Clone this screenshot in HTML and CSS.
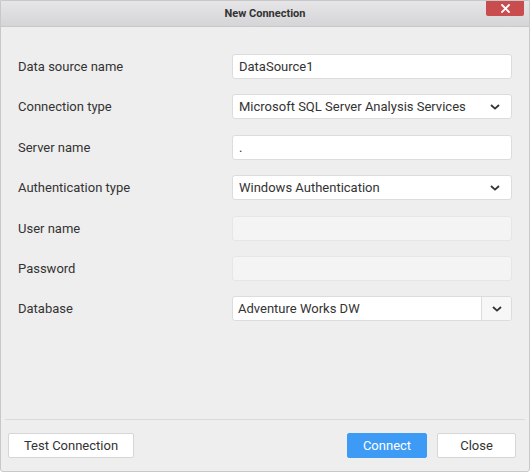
FILE: index.html
```html
<!DOCTYPE html>
<html>
<head>
<meta charset="utf-8">
<link rel="stylesheet" href="styles.css">
</head>
<body>
<div class="dialog">
  <div class="titlebar">
    <span class="title">New Connection</span>
    <button class="close-x" aria-label="Close">
      <svg width="9" height="9" viewBox="0 0 9 9"><path d="M1 1L8 8M8 1L1 8" stroke="#fff" stroke-width="1.8" stroke-linecap="square"/></svg>
    </button>
  </div>
  <div class="body">
    <div class="row"><label>Data source name</label><div class="field">DataSource1</div></div>
    <div class="row"><label>Connection type</label><div class="field select"><span>Microsoft SQL Server Analysis Services</span><svg class="chev" width="10" height="6" viewBox="0 0 10 6"><path d="M1 1L5 4.6L9 1" fill="none" stroke="#333" stroke-width="1.8"/></svg></div></div>
    <div class="row"><label>Server name</label><div class="field">.</div></div>
    <div class="row"><label>Authentication type</label><div class="field select"><span>Windows Authentication</span><svg class="chev" width="10" height="6" viewBox="0 0 10 6"><path d="M1 1L5 4.6L9 1" fill="none" stroke="#333" stroke-width="1.8"/></svg></div></div>
    <div class="row"><label>User name</label><div class="field disabled"></div></div>
    <div class="row"><label>Password</label><div class="field disabled"></div></div>
    <div class="row"><label>Database</label><div class="field combo"><span class="combo-text">Adventure Works DW</span><span class="combo-btn"><svg width="10" height="6" viewBox="0 0 10 6"><path d="M1 1L5 4.6L9 1" fill="none" stroke="#333" stroke-width="1.8"/></svg></span></div></div>
  </div>
  <div class="footer">
    <button class="btn">Test Connection</button>
    <div class="spacer"></div>
    <button class="btn primary">Connect</button>
    <button class="btn close-btn">Close</button>
  </div>
</div>
</body>
</html>
```
FILE: styles.css
```css
* { box-sizing: border-box; }
html, body { margin: 0; padding: 0; background: #ffffff; }
body {
  font-family: Roboto, "Noto Sans", Arial, sans-serif;
  font-size: 13px;
  color: #333;
}
.dialog {
  width: 530px;
  height: 472px;
  border: 1px solid #c8c8c8;
  border-radius: 0 0 3px 3px;
  background: #eeeeee;
  display: flex;
  flex-direction: column;
}
.titlebar {
  height: 26px;
  background: linear-gradient(#e6e5e7, #d5d4d6);
  border-bottom: 1px solid #c9c9cb;
  display: flex;
  justify-content: center;
  align-items: center;
  position: relative;
}
.title {
  font-size: 11px;
  font-weight: 700;
  color: #333;
}
.close-x {
  position: absolute;
  top: 0;
  right: 5px;
  width: 38px;
  height: 15px;
  border: none;
  padding: 0;
  background: #c94c4e;
  border-radius: 0 0 2px 2px;
  display: flex;
  align-items: center;
  justify-content: center;
}
.body {
  flex: 1;
  padding: 27px 17px 0 17px;
  display: flex;
  flex-direction: column;
  gap: 15.4px;
}
.row {
  display: flex;
  align-items: center;
  height: 25px;
}
.row label {
  width: 214px;
  font-size: 13px;
  color: #333;
}
.field {
  width: 280px;
  height: 25px;
  background: #fff;
  border: 1px solid #dcdcdc;
  border-radius: 3px;
  padding: 0 6px;
  display: flex;
  align-items: center;
  font-size: 13px;
  color: #333;
}
.select { justify-content: space-between; padding-right: 11px; }
.chev { display: block; }
.disabled { background: #f4f4f4; border-color: #e6e6e6; }
.combo { padding: 0; }
.combo-text { flex: 1; padding-left: 5px; }
.combo-btn {
  width: 30px;
  height: 100%;
  border-left: 1px solid #dcdcdc;
  background: #f7f7f7;
  display: flex;
  align-items: center;
  justify-content: center;
  border-radius: 0 3px 3px 0;
}
.footer {
  height: 52px;
  border-top: 1px solid #dadada;
  margin: 0 4px 0 4px;
  padding: 13px 9px 0 3px;
  display: flex;
  align-items: flex-start;
  gap: 10px;
}
.spacer { flex: 1; }
.btn {
  height: 25px;
  font-family: Roboto, "Noto Sans", Arial, sans-serif;
  font-size: 13px;
  color: #333;
  background: #fff;
  border: 1px solid #d6d6d6;
  border-radius: 2px;
  padding: 0;
  width: 126px;
}
.primary {
  width: 80px;
  background: #3d9bf5;
  border-color: #3d9bf5;
  color: #fff;
}
.close-btn { width: 79px; }
```
